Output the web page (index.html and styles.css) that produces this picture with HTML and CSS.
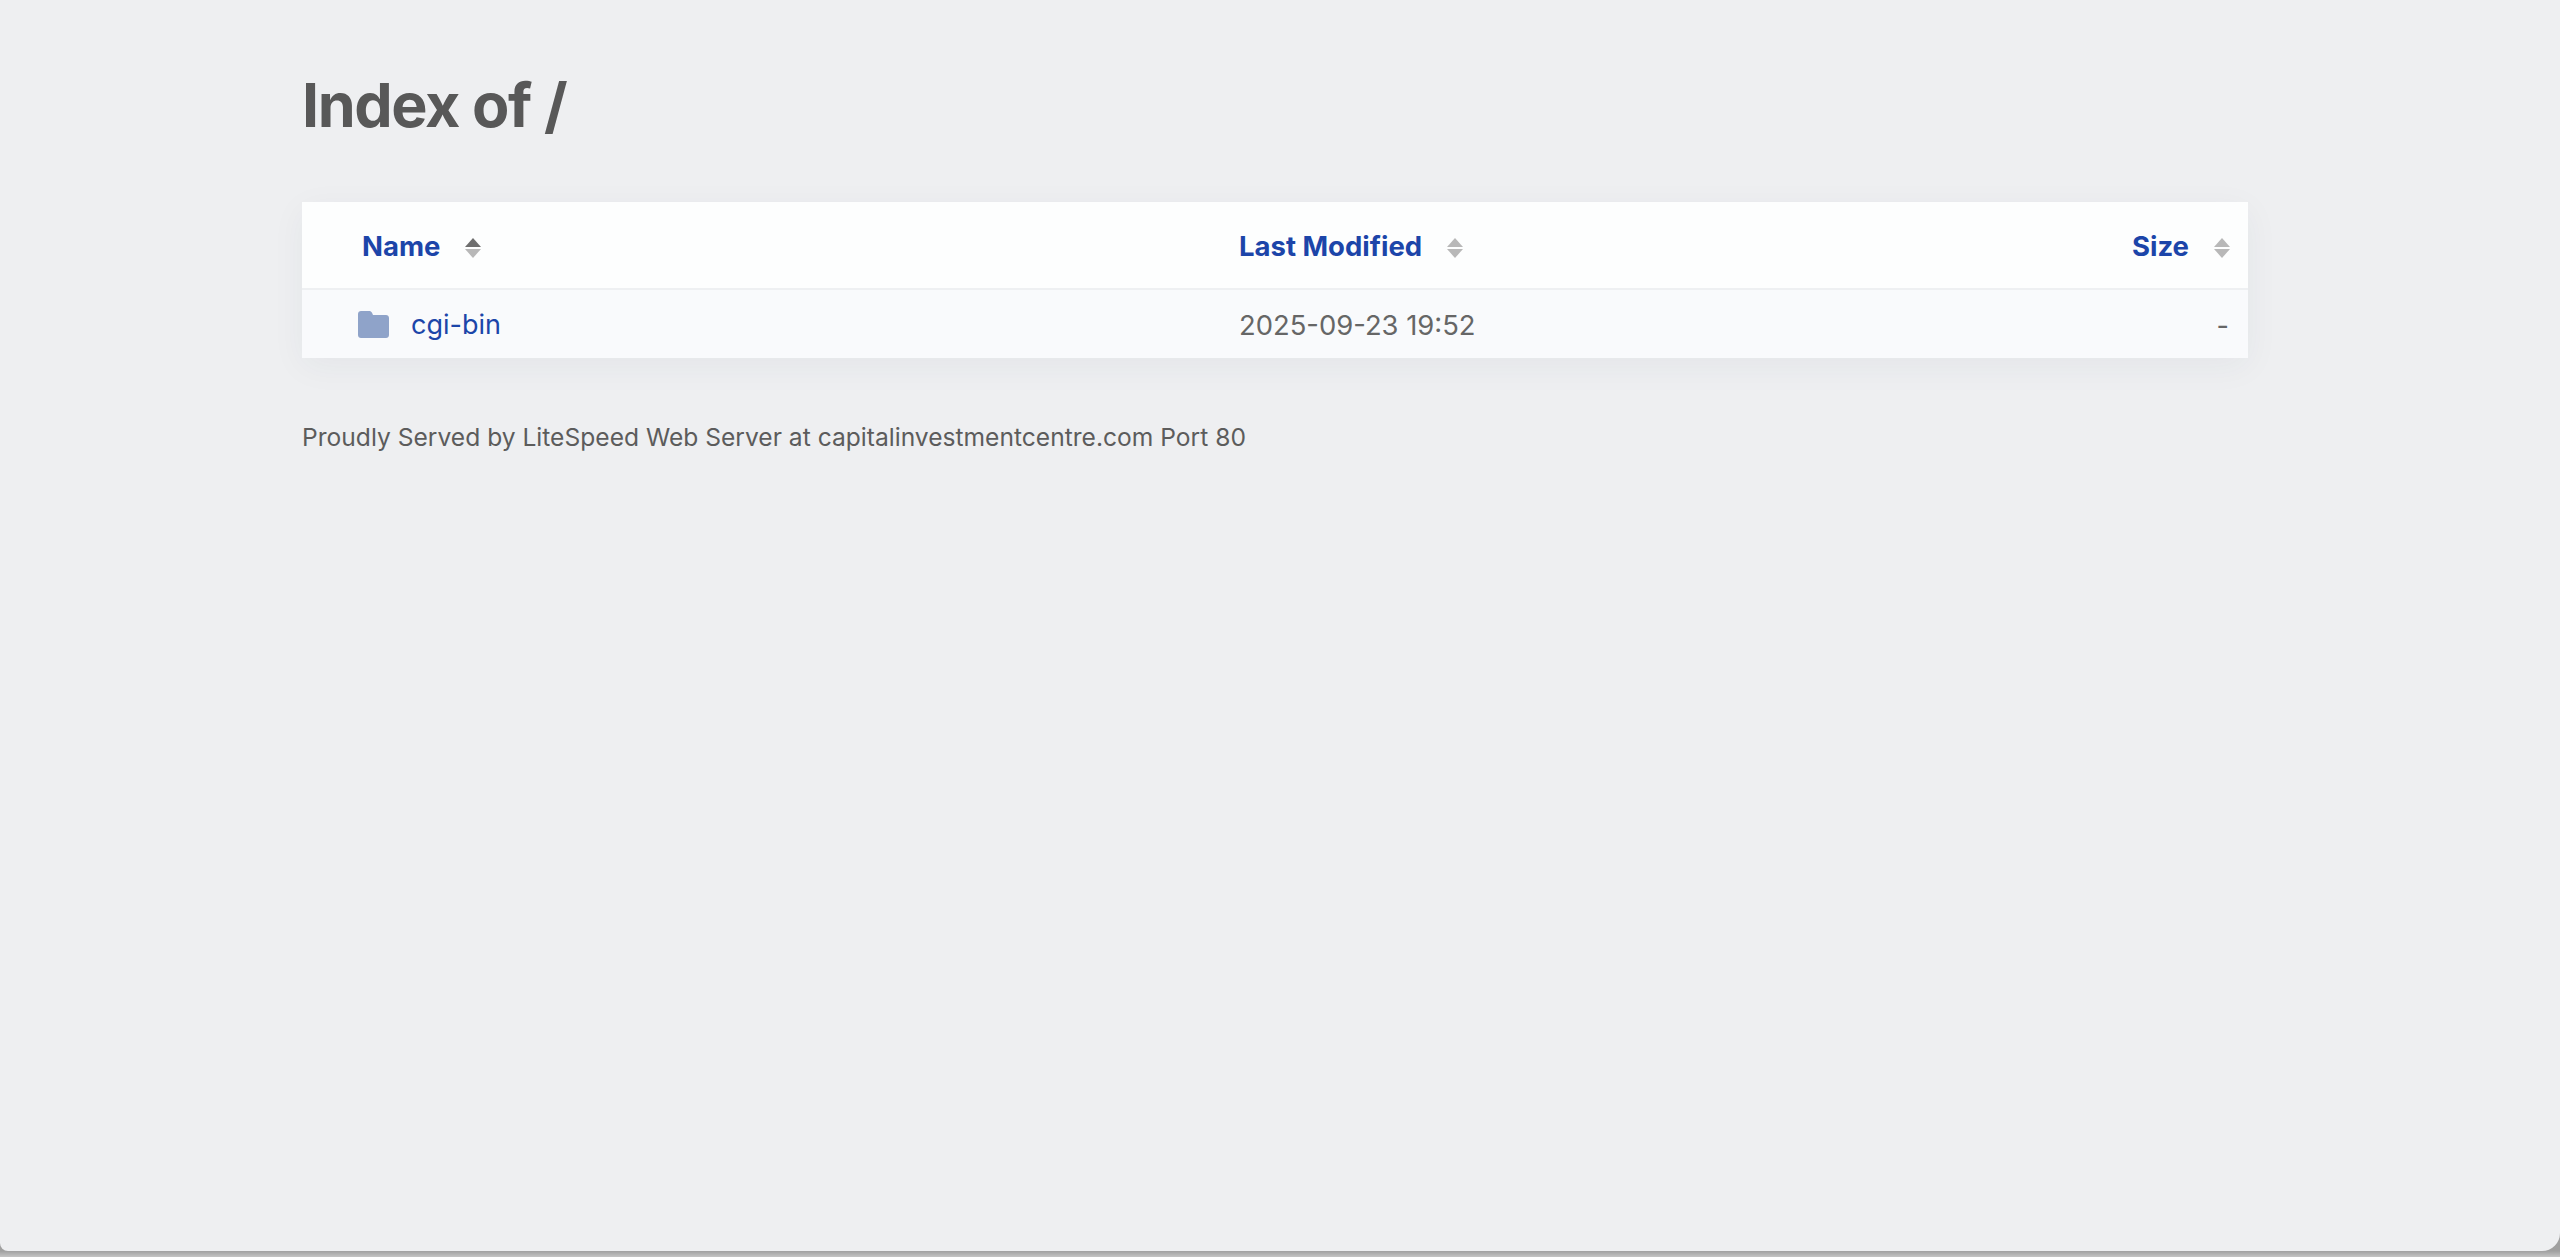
FILE: index.html
```html
<!DOCTYPE html>
<html lang="en">
<head>
<meta charset="utf-8">
<title>Index of /</title>
<link rel="stylesheet" href="styles.css">
</head>
<body>
<main class="page">
  <h1 class="title">Index of /</h1>
  <table class="listing">
    <thead>
      <tr>
        <th class="col-name"><a href="#">Name</a><svg class="sort" viewBox="0 0 16 20"><path class="up active" d="M8 0l8 9H0z"/><path class="down" d="M0 11h16l-8 9z"/></svg></th>
        <th class="col-date"><a href="#">Last Modified</a><svg class="sort" viewBox="0 0 16 20"><path class="up" d="M8 0l8 9H0z"/><path class="down" d="M0 11h16l-8 9z"/></svg></th>
        <th class="col-size"><a href="#">Size</a><svg class="sort" viewBox="0 0 16 20"><path class="up" d="M8 0l8 9H0z"/><path class="down" d="M0 11h16l-8 9z"/></svg></th>
      </tr>
    </thead>
    <tbody>
      <tr>
        <td class="col-name"><a class="entry" href="#"><svg class="folder" viewBox="0 0 31 27"><path d="M3 0h8c1.500 0 2.300.6 3 1.700L15 4h13c1.700 0 3 1.300 3 3v17c0 1.700-1.300 3-3 3H3c-1.700 0-3-1.300-3-3V3c0-1.700 1.300-3 3-3z"/></svg>cgi-bin</a></td>
        <td class="col-date">2025-09-23 19:52</td>
        <td class="col-size">-</td>
      </tr>
    </tbody>
  </table>
  <p class="footer">Proudly Served by LiteSpeed Web Server at capitalinvestmentcentre.com Port 80</p>
</main>
</body>
</html>
```
FILE: styles.css
```css
* { box-sizing: border-box; }
html, body { margin: 0; padding: 0; }
body {
  height: 1257px;
  overflow: hidden;
  background: linear-gradient(#a0a0a0 1251px, #c4c4c4 1257px);
  font-family: Inter, "Liberation Sans", sans-serif;
  color: #666;
}
.page {
  height: 1251px;
  padding: 68px 312px 0 302px;
  background: #eeeff1;
  border-radius: 0 0 18px 8px;
}
.title {
  margin: 0 0 60px;
  height: 74px;
  font-size: 61px;
  line-height: 74px;
  font-weight: 700;
  letter-spacing: -1.4px;
  color: #585858;
}
.listing {
  width: 1946px;
  border-collapse: collapse;
  table-layout: fixed;
  box-shadow: 0 8px 32px rgba(30, 50, 80, .05);
}
.listing a { color: #1c45a9; text-decoration: none; }
th {
  height: 87px;
  padding: 2px 0 0;
  background: #fdfefe;
  border-bottom: 2px solid #eef0f2;
  font-size: 27.5px;
  font-weight: 700;
  text-align: left;
}
td {
  height: 69px;
  padding: 2px 0 0;
  background: #f9fafc;
  font-size: 27px;
}
.col-name { width: 937px; padding-left: 60px; }
td.col-name { padding: 4px 0 0 56px; }
.col-date { width: 700px; }
td.col-date { font-size: 27.4px; }
.col-size { padding-right: 18px; text-align: right; }
td.col-size { padding-right: 19px; }
.sort { width: 16px; height: 20px; margin-left: 25px; vertical-align: -2px; }
.sort path { fill: #b8b8b8; }
.sort path.active { fill: #6e6e6e; }
.entry { display: inline-flex; align-items: center; gap: 22px; }
.folder { width: 31px; height: 27px; fill: #8fa3c9; }
.footer {
  margin: 61px 0 0;
  font-size: 24.6px;
  line-height: 36px;
  color: #5c5c5c;
}
```
